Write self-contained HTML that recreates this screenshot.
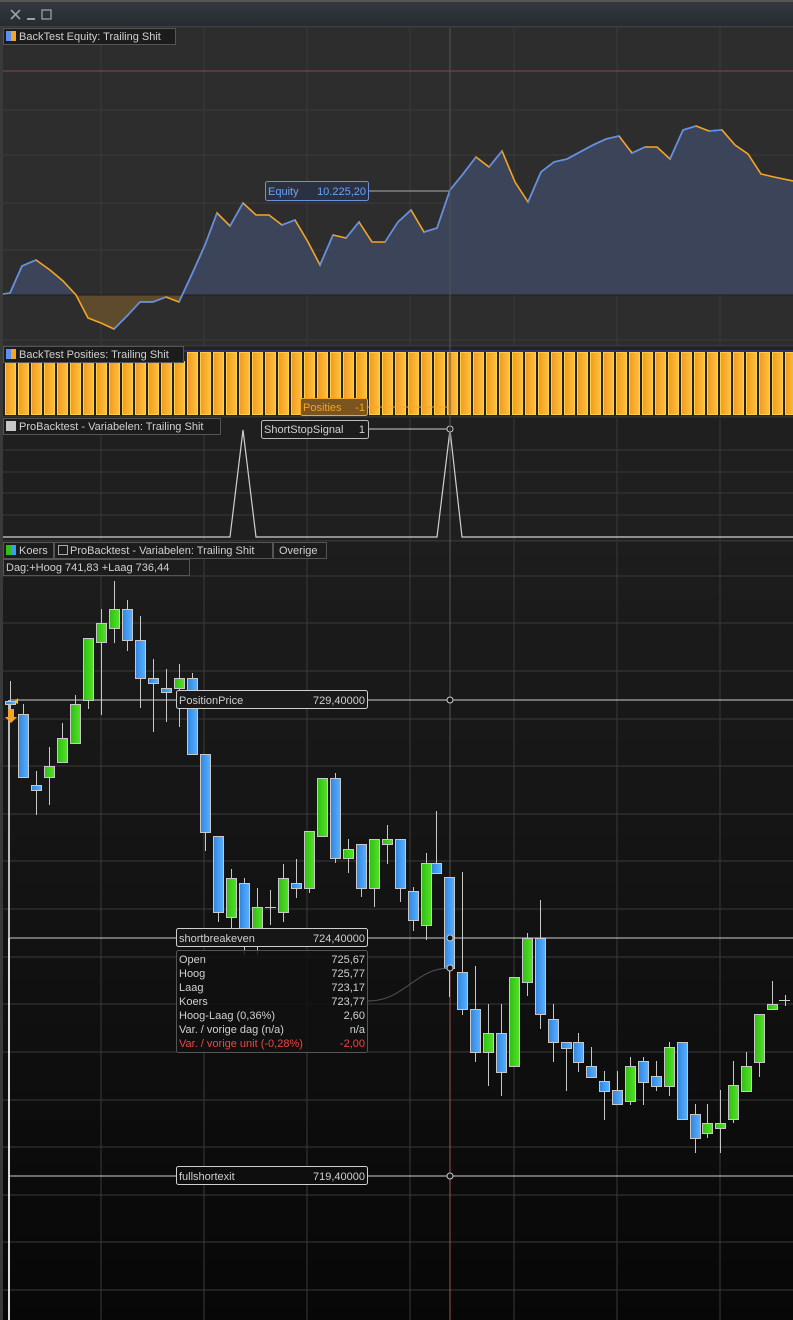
<!DOCTYPE html>
<html><head><meta charset="utf-8"><style>
html,body{margin:0;padding:0;background:#111;}
svg{display:block;font-family:"Liberation Sans",sans-serif;}
.w{stroke:#c8c8c8;stroke-width:1;}
.b{fill:url(#gb);stroke:#c8c8c8;stroke-width:1;}
.g{fill:url(#gg);stroke:#c8c8c8;stroke-width:1;}
.lbl{fill:#1c1c1c;stroke:#555;stroke-width:1;}
.t{fill:#d0d0d0;font-size:11px;}
.grid{stroke:#3a3a3a;stroke-width:1;}
.bar{fill:url(#go);stroke:#ffcf45;stroke-width:1;}
</style></head><body>
<svg width="793" height="1320" viewBox="0 0 793 1320" xmlns="http://www.w3.org/2000/svg">
<defs>
<linearGradient id="gb" x1="0" x2="1"><stop offset="0" stop-color="#2f86e0"/><stop offset="1" stop-color="#5ab0ff"/></linearGradient>
<linearGradient id="gg" x1="0" x2="1"><stop offset="0" stop-color="#2fc012"/><stop offset="1" stop-color="#55e028"/></linearGradient>
<linearGradient id="go" x1="0" x2="1"><stop offset="0" stop-color="#f39a1c"/><stop offset="1" stop-color="#fdc040"/></linearGradient>
<linearGradient id="gc" x1="0" y1="0" x2="0" y2="1"><stop offset="0" stop-color="#1d1d1d"/><stop offset="1" stop-color="#070707"/></linearGradient>
<linearGradient id="gt" x1="0" y1="0" x2="0" y2="1"><stop offset="0" stop-color="#343a40"/><stop offset="1" stop-color="#262b30"/></linearGradient>
<clipPath id="up"><rect x="0" y="28" width="793" height="267"/></clipPath>
<clipPath id="dn"><rect x="0" y="295" width="793" height="50"/></clipPath>
</defs>
<!-- title bar -->
<rect x="0" y="0" width="793" height="27" fill="url(#gt)"/>
<rect x="0" y="0" width="793" height="2" fill="#555"/>
<line x1="0" y1="27" x2="793" y2="27" stroke="#555"/>
<path d="M11 10 L20 19 M20 10 L11 19" stroke="#9aa0a6" stroke-width="1.6"/>
<rect x="27" y="18" width="8" height="2" fill="#9aa0a6"/>
<rect x="42" y="10" width="9" height="9" fill="none" stroke="#9aa0a6" stroke-width="1.3"/>
<rect x="0" y="27" width="3" height="1293" fill="#3a3a3a"/>
<!-- equity panel -->
<rect x="3" y="28" width="790" height="318" fill="#2d2d2d"/>
<g class="grid"><line x1="101" y1="28" x2="101" y2="346"/><line x1="204" y1="28" x2="204" y2="346"/><line x1="307" y1="28" x2="307" y2="346"/><line x1="410" y1="28" x2="410" y2="346"/><line x1="514" y1="28" x2="514" y2="346"/><line x1="617" y1="28" x2="617" y2="346"/><line x1="720" y1="28" x2="720" y2="346"/>
<line x1="3" y1="110" x2="793" y2="110"/><line x1="3" y1="155" x2="793" y2="155"/><line x1="3" y1="203" x2="793" y2="203"/><line x1="3" y1="250" x2="793" y2="250"/><line x1="3" y1="340" x2="793" y2="340"/></g>
<line x1="3" y1="71" x2="793" y2="71" stroke="#8a4646"/>
<polygon clip-path="url(#up)" fill="#3b4459" points="3,295 3,294 10,293 22,266 36,260 50,270 63,281 76,295 88,318 101,323 114,329 127,316 140,302 153,302 166,297 179,302 192,274 205,245 217,213 230,226 243,203 256,215 269,215 282,225 295,220 308,242 320,265 333,235 346,238 359,222 372,242 385,242 398,222 411,210 424,232 437,228 450,190 463,174 476,157 489,167 502,151 515,182 528,202 541,172 554,162 567,159 580,152 593,145 606,139 619,136 632,153 645,147 657,147 670,159 683,130 696,126 709,131 722,130 735,145 748,154 761,174 774,177 793,181 793,295"/>
<polygon clip-path="url(#dn)" fill="#5e4a2c" points="3,295 3,294 10,293 22,266 36,260 50,270 63,281 76,295 88,318 101,323 114,329 127,316 140,302 153,302 166,297 179,302 192,274 205,245 205,295"/>
<line x1="3" y1="295" x2="793" y2="295" stroke="#1e1e1e"/>
<polyline fill="none" stroke="#f5a524" stroke-width="1.6" points="3,294 10,293 22,266 36,260 50,270 63,281 76,295 88,318 101,323 114,329 127,316 140,302 153,302 166,297 179,302 192,274 205,245 217,213 230,226 243,203 256,215 269,215 282,225 295,220 308,242 320,265 333,235 346,238 359,222 372,242 385,242 398,222 411,210 424,232 437,228 450,190 463,174 476,157 489,167 502,151 515,182 528,202 541,172 554,162 567,159 580,152 593,145 606,139 619,136 632,153 645,147 657,147 670,159 683,130 696,126 709,131 722,130 735,145 748,154 761,174 774,177 793,181"/>
<g fill="none" stroke="#5b8ff2" stroke-width="1.6">
<polyline points="3,294 10,293 22,266 36,260"/><polyline points="114,329 127,316 140,302 153,302 166,297"/><polyline points="179,302 192,274 205,245 217,213"/><polyline points="230,226 243,203"/><polyline points="282,225 295,220"/><polyline points="320,265 333,235"/><polyline points="346,238 359,222"/><polyline points="385,242 398,222 411,210"/><polyline points="424,232 437,228 450,190 463,174 476,157"/><polyline points="489,167 502,151"/><polyline points="528,202 541,172 554,162 567,159 580,152 593,145 606,139 619,136"/><polyline points="632,153 645,147"/><polyline points="670,159 683,130 696,126"/><polyline points="709,131 722,130"/></g>
<line x1="369" y1="191" x2="450" y2="191" stroke="#aaa"/>
<rect x="265.5" y="181.5" width="103" height="19" rx="2" fill="#2a3140" stroke="#6f8fd8"/>
<text x="268" y="195" fill="#6fa0ff" font-size="11">Equity</text><text x="366" y="195" fill="#6fa0ff" font-size="11" text-anchor="end">10.225,20</text>
<rect x="3.5" y="28.5" width="172" height="16" class="lbl"/>
<rect x="6" y="31" width="5" height="10" fill="#5b8ff2"/><rect x="11" y="31" width="5" height="10" fill="#f5a524"/>
<text x="19" y="40" class="t">BackTest Equity: Trailing Shit</text>
<line x1="3" y1="346" x2="793" y2="346" stroke="#444"/>
<!-- positions panel -->
<rect x="3" y="347" width="790" height="70" fill="#232323"/>
<line x1="183" y1="351" x2="793" y2="351" stroke="#3040c0"/>
<g class="bar">
<rect x="5.5" y="361.5" width="10" height="53"/><rect x="18.5" y="361.5" width="10" height="53"/><rect x="31.5" y="361.5" width="10" height="53"/><rect x="44.5" y="361.5" width="10" height="53"/><rect x="57.5" y="361.5" width="10" height="53"/><rect x="70.5" y="361.5" width="10" height="53"/><rect x="83.5" y="361.5" width="10" height="53"/><rect x="96.5" y="361.5" width="10" height="53"/><rect x="109.5" y="361.5" width="10" height="53"/><rect x="122.5" y="361.5" width="10" height="53"/><rect x="135.5" y="361.5" width="10" height="53"/><rect x="148.5" y="361.5" width="10" height="53"/><rect x="161.5" y="361.5" width="10" height="53"/><rect x="174.5" y="361.5" width="10" height="53"/>
<rect x="187.5" y="352.5" width="10" height="62"/><rect x="200.5" y="352.5" width="10" height="62"/><rect x="213.5" y="352.5" width="10" height="62"/><rect x="226.5" y="352.5" width="10" height="62"/><rect x="239.5" y="352.5" width="10" height="62"/><rect x="252.5" y="352.5" width="10" height="62"/><rect x="265.5" y="352.5" width="10" height="62"/><rect x="278.5" y="352.5" width="10" height="62"/><rect x="291.5" y="352.5" width="10" height="62"/><rect x="304.5" y="352.5" width="10" height="62"/><rect x="317.5" y="352.5" width="10" height="62"/><rect x="330.5" y="352.5" width="10" height="62"/><rect x="343.5" y="352.5" width="10" height="62"/><rect x="356.5" y="352.5" width="10" height="62"/><rect x="369.5" y="352.5" width="10" height="62"/><rect x="382.5" y="352.5" width="10" height="62"/><rect x="395.5" y="352.5" width="10" height="62"/><rect x="408.5" y="352.5" width="10" height="62"/><rect x="421.5" y="352.5" width="10" height="62"/><rect x="434.5" y="352.5" width="10" height="62"/><rect x="447.5" y="352.5" width="10" height="62"/><rect x="460.5" y="352.5" width="10" height="62"/><rect x="473.5" y="352.5" width="10" height="62"/><rect x="486.5" y="352.5" width="10" height="62"/><rect x="499.5" y="352.5" width="10" height="62"/><rect x="512.5" y="352.5" width="10" height="62"/><rect x="525.5" y="352.5" width="10" height="62"/><rect x="538.5" y="352.5" width="10" height="62"/><rect x="551.5" y="352.5" width="10" height="62"/><rect x="564.5" y="352.5" width="10" height="62"/><rect x="577.5" y="352.5" width="10" height="62"/><rect x="590.5" y="352.5" width="10" height="62"/><rect x="603.5" y="352.5" width="10" height="62"/><rect x="616.5" y="352.5" width="10" height="62"/><rect x="629.5" y="352.5" width="10" height="62"/><rect x="642.5" y="352.5" width="10" height="62"/><rect x="655.5" y="352.5" width="10" height="62"/><rect x="668.5" y="352.5" width="10" height="62"/><rect x="681.5" y="352.5" width="10" height="62"/><rect x="694.5" y="352.5" width="10" height="62"/><rect x="707.5" y="352.5" width="10" height="62"/><rect x="720.5" y="352.5" width="10" height="62"/><rect x="733.5" y="352.5" width="10" height="62"/><rect x="746.5" y="352.5" width="10" height="62"/><rect x="759.5" y="352.5" width="10" height="62"/><rect x="772.5" y="352.5" width="10" height="62"/><rect x="785.5" y="352.5" width="10" height="62"/>
</g>
<rect x="3.5" y="346.5" width="180" height="16" class="lbl"/>
<rect x="6" y="349" width="5" height="10" fill="#5b8ff2"/><rect x="11" y="349" width="5" height="10" fill="#f5a524"/>
<text x="19" y="358" class="t">BackTest Posities: Trailing Shit</text>
<line x1="368" y1="407" x2="450" y2="407" stroke="#f5a524"/>
<rect x="300.5" y="398.5" width="67" height="17" rx="2" fill="#7a5520" stroke="#f5a524"/>
<text x="303" y="411" fill="#f5a524" font-size="11">Posities</text><text x="365" y="411" fill="#f5a524" font-size="11" text-anchor="end">-1</text>
<line x1="3" y1="417" x2="793" y2="417" stroke="#444"/>
<!-- variables panel -->
<rect x="3" y="418" width="790" height="123" fill="#1f1f1f"/>
<g class="grid"><line x1="101" y1="418" x2="101" y2="540"/><line x1="204" y1="418" x2="204" y2="540"/><line x1="307" y1="418" x2="307" y2="540"/><line x1="410" y1="418" x2="410" y2="540"/><line x1="514" y1="418" x2="514" y2="540"/><line x1="617" y1="418" x2="617" y2="540"/><line x1="720" y1="418" x2="720" y2="540"/>
<line x1="3" y1="450" x2="793" y2="450"/><line x1="3" y1="472" x2="793" y2="472"/><line x1="3" y1="493" x2="793" y2="493"/><line x1="3" y1="515" x2="793" y2="515"/></g>
<polyline fill="none" stroke="#d0d0d0" stroke-width="1.2" points="3,537 230,537 243,430 256,537 437,537 450,430 462,537 793,537"/>
<line x1="368" y1="429" x2="450" y2="429" stroke="#ccc"/>
<circle cx="450" cy="429" r="3" fill="#111" stroke="#ccc"/>
<rect x="3.5" y="418.5" width="217" height="16" class="lbl"/>
<rect x="6" y="421" width="10" height="10" fill="#c8c8c8"/>
<text x="19" y="430" class="t">ProBacktest - Variabelen: Trailing Shit</text>
<rect x="261.5" y="420.5" width="107" height="18" rx="2" fill="#1c1c1c" stroke="#bbb"/>
<text x="264" y="433" class="t">ShortStopSignal</text><text x="365" y="433" class="t" text-anchor="end">1</text>
<line x1="3" y1="541" x2="793" y2="541" stroke="#444"/>
<!-- candle panel -->
<rect x="3" y="542" width="790" height="778" fill="url(#gc)"/>
<g class="grid"><line x1="101" y1="542" x2="101" y2="1320"/><line x1="204" y1="542" x2="204" y2="1320"/><line x1="307" y1="542" x2="307" y2="1320"/><line x1="410" y1="542" x2="410" y2="1320"/><line x1="514" y1="542" x2="514" y2="1320"/><line x1="617" y1="542" x2="617" y2="1320"/><line x1="720" y1="542" x2="720" y2="1320"/>
<line x1="3" y1="576" x2="793" y2="576"/><line x1="3" y1="623" x2="793" y2="623"/><line x1="3" y1="671" x2="793" y2="671"/><line x1="3" y1="719" x2="793" y2="719"/><line x1="3" y1="766" x2="793" y2="766"/><line x1="3" y1="814" x2="793" y2="814"/><line x1="3" y1="861" x2="793" y2="861"/><line x1="3" y1="909" x2="793" y2="909"/><line x1="3" y1="957" x2="793" y2="957"/><line x1="3" y1="1004" x2="793" y2="1004"/><line x1="3" y1="1052" x2="793" y2="1052"/><line x1="3" y1="1100" x2="793" y2="1100"/><line x1="3" y1="1147" x2="793" y2="1147"/><line x1="3" y1="1195" x2="793" y2="1195"/><line x1="3" y1="1242" x2="793" y2="1242"/><line x1="3" y1="1290" x2="793" y2="1290"/></g>
<line x1="450" y1="28" x2="450" y2="968" stroke="#555"/>
<line x1="450" y1="968" x2="450" y2="1320" stroke="#a05050"/>
<!-- level lines -->
<line x1="10" y1="700" x2="793" y2="700" stroke="#cfcfcf"/>
<line x1="10" y1="938" x2="793" y2="938" stroke="#cfcfcf"/>
<line x1="10" y1="1176" x2="793" y2="1176" stroke="#cfcfcf"/>
<rect x="8" y="700" width="2" height="620" fill="#bbb"/>
<rect x="8" y="938" width="2" height="382" fill="#ddd"/>
<!-- candles -->
<g>
<line class="w" x1="10.5" y1="681" x2="10.5" y2="720"/><rect class="b" x="5.5" y="701.5" width="10" height="3"/>
<line class="w" x1="23.5" y1="704" x2="23.5" y2="777"/><rect class="b" x="18.5" y="714.5" width="10" height="63"/>
<line class="w" x1="36.5" y1="771" x2="36.5" y2="815"/><rect class="b" x="31.5" y="785.5" width="10" height="5"/>
<line class="w" x1="49.5" y1="747" x2="49.5" y2="805"/><rect class="g" x="44.5" y="766.5" width="10" height="11"/>
<line class="w" x1="62.5" y1="723" x2="62.5" y2="762"/><rect class="g" x="57.5" y="738.5" width="10" height="24"/>
<line class="w" x1="75.5" y1="695" x2="75.5" y2="743"/><rect class="g" x="70.5" y="704.5" width="10" height="39"/>
<line class="w" x1="88.5" y1="638" x2="88.5" y2="709"/><rect class="g" x="83.5" y="638.5" width="10" height="62"/>
<line class="w" x1="101.5" y1="609" x2="101.5" y2="715"/><rect class="g" x="96.5" y="623.5" width="10" height="19"/>
<line class="w" x1="114.5" y1="581" x2="114.5" y2="643"/><rect class="g" x="109.5" y="609.5" width="10" height="19"/>
<line class="w" x1="127.5" y1="600" x2="127.5" y2="651"/><rect class="b" x="122.5" y="609.5" width="10" height="31"/>
<line class="w" x1="140.5" y1="616" x2="140.5" y2="708"/><rect class="b" x="135.5" y="640.5" width="10" height="38"/>
<line class="w" x1="153.5" y1="659" x2="153.5" y2="732"/><rect class="b" x="148.5" y="678.5" width="10" height="5"/>
<line class="w" x1="166.5" y1="669" x2="166.5" y2="722"/><rect class="b" x="161.5" y="688.5" width="10" height="4"/>
<line class="w" x1="179.5" y1="664" x2="179.5" y2="727"/><rect class="g" x="174.5" y="678.5" width="10" height="10"/>
<line class="w" x1="192.5" y1="673" x2="192.5" y2="754"/><rect class="b" x="187.5" y="678.5" width="10" height="76"/>
<line class="w" x1="205.5" y1="754" x2="205.5" y2="851"/><rect class="b" x="200.5" y="754.5" width="10" height="78"/>
<line class="w" x1="218.5" y1="836" x2="218.5" y2="922"/><rect class="b" x="213.5" y="836.5" width="10" height="76"/>
<line class="w" x1="231.5" y1="869" x2="231.5" y2="932"/><rect class="g" x="226.5" y="878.5" width="10" height="39"/>
<line class="w" x1="244.5" y1="878" x2="244.5" y2="955"/><rect class="b" x="239.5" y="883.5" width="10" height="57"/>
<line class="w" x1="257.5" y1="888" x2="257.5" y2="955"/><rect class="g" x="252.5" y="907.5" width="10" height="38"/>
<line class="w" x1="270.5" y1="890" x2="270.5" y2="925"/><line class="w" x1="265" y1="907.5" x2="276" y2="907.5"/>
<line class="w" x1="283.5" y1="864" x2="283.5" y2="922"/><rect class="g" x="278.5" y="878.5" width="10" height="34"/>
<line class="w" x1="296.5" y1="859" x2="296.5" y2="898"/><rect class="b" x="291.5" y="883.5" width="10" height="5"/>
<line class="w" x1="309.5" y1="831" x2="309.5" y2="893"/><rect class="g" x="304.5" y="831.5" width="10" height="57"/>
<line class="w" x1="322.5" y1="778" x2="322.5" y2="836"/><rect class="g" x="317.5" y="778.5" width="10" height="58"/>
<line class="w" x1="335.5" y1="773" x2="335.5" y2="863"/><rect class="b" x="330.5" y="778.5" width="10" height="80"/>
<line class="w" x1="348.5" y1="839" x2="348.5" y2="873"/><rect class="g" x="343.5" y="849.5" width="10" height="9"/>
<line class="w" x1="361.5" y1="844" x2="361.5" y2="897"/><rect class="b" x="356.5" y="844.5" width="10" height="44"/>
<line class="w" x1="374.5" y1="839" x2="374.5" y2="907"/><rect class="g" x="369.5" y="839.5" width="10" height="49"/>
<line class="w" x1="387.5" y1="825" x2="387.5" y2="864"/><rect class="g" x="382.5" y="839.5" width="10" height="5"/>
<line class="w" x1="400.5" y1="839" x2="400.5" y2="902"/><rect class="b" x="395.5" y="839.5" width="10" height="49"/>
<line class="w" x1="413.5" y1="887" x2="413.5" y2="931"/><rect class="b" x="408.5" y="891.5" width="10" height="29"/>
<line class="w" x1="426.5" y1="853" x2="426.5" y2="940"/><rect class="g" x="421.5" y="863.5" width="10" height="62"/>
<line class="w" x1="436.5" y1="811" x2="436.5" y2="873"/><rect class="b" x="431.5" y="863.5" width="10" height="10"/>
<line class="w" x1="449.5" y1="877" x2="449.5" y2="997"/><rect class="b" x="444.5" y="877.5" width="10" height="91"/>
<line class="w" x1="462.5" y1="872" x2="462.5" y2="1015"/><rect class="b" x="457.5" y="972.5" width="10" height="37"/>
<line class="w" x1="475.5" y1="966" x2="475.5" y2="1062"/><rect class="b" x="470.5" y="1009.5" width="10" height="43"/>
<line class="w" x1="488.5" y1="1004" x2="488.5" y2="1086"/><rect class="g" x="483.5" y="1033.5" width="10" height="19"/>
<line class="w" x1="501.5" y1="1004" x2="501.5" y2="1096"/><rect class="b" x="496.5" y="1033.5" width="10" height="39"/>
<line class="w" x1="514.5" y1="977" x2="514.5" y2="1066"/><rect class="g" x="509.5" y="977.5" width="10" height="89"/>
<line class="w" x1="527.5" y1="933" x2="527.5" y2="996"/><rect class="g" x="522.5" y="938.5" width="10" height="44"/>
<line class="w" x1="540.5" y1="900" x2="540.5" y2="1029"/><rect class="b" x="535.5" y="938.5" width="10" height="76"/>
<line class="w" x1="553.5" y1="1004" x2="553.5" y2="1062"/><rect class="b" x="548.5" y="1019.5" width="10" height="23"/>
<line class="w" x1="566.5" y1="1042" x2="566.5" y2="1091"/><rect class="b" x="561.5" y="1042.5" width="10" height="6"/>
<line class="w" x1="578.5" y1="1033" x2="578.5" y2="1072"/><rect class="b" x="573.5" y="1042.5" width="10" height="20"/>
<line class="w" x1="591.5" y1="1047" x2="591.5" y2="1077"/><rect class="b" x="586.5" y="1066.5" width="10" height="11"/>
<line class="w" x1="604.5" y1="1071" x2="604.5" y2="1120"/><rect class="b" x="599.5" y="1081.5" width="10" height="10"/>
<line class="w" x1="617.5" y1="1071" x2="617.5" y2="1104"/><rect class="b" x="612.5" y="1090.5" width="10" height="14"/>
<line class="w" x1="630.5" y1="1057" x2="630.5" y2="1105"/><rect class="g" x="625.5" y="1066.5" width="10" height="35"/>
<line class="w" x1="643.5" y1="1057" x2="643.5" y2="1105"/><rect class="b" x="638.5" y="1061.5" width="10" height="21"/>
<line class="w" x1="656.5" y1="1061" x2="656.5" y2="1091"/><rect class="b" x="651.5" y="1076.5" width="10" height="10"/>
<line class="w" x1="669.5" y1="1042" x2="669.5" y2="1096"/><rect class="g" x="664.5" y="1047.5" width="10" height="39"/>
<line class="w" x1="682.5" y1="1042" x2="682.5" y2="1119"/><rect class="b" x="677.5" y="1042.5" width="10" height="77"/>
<line class="w" x1="695.5" y1="1104" x2="695.5" y2="1153"/><rect class="b" x="690.5" y="1114.5" width="10" height="24"/>
<line class="w" x1="707.5" y1="1104" x2="707.5" y2="1138"/><rect class="g" x="702.5" y="1123.5" width="10" height="10"/>
<line class="w" x1="720.5" y1="1090" x2="720.5" y2="1153"/><rect class="g" x="715.5" y="1123.5" width="10" height="5"/>
<line class="w" x1="733.5" y1="1061" x2="733.5" y2="1123"/><rect class="g" x="728.5" y="1085.5" width="10" height="34"/>
<line class="w" x1="746.5" y1="1052" x2="746.5" y2="1091"/><rect class="g" x="741.5" y="1066.5" width="10" height="25"/>
<line class="w" x1="759.5" y1="1014" x2="759.5" y2="1077"/><rect class="g" x="754.5" y="1014.5" width="10" height="48"/>
<line class="w" x1="772.5" y1="981" x2="772.5" y2="1009"/><rect class="g" x="767.5" y="1004.5" width="10" height="5"/>
<path d="M779 1000.5 H790 M785.5 995 V1006" stroke="#ccc"/>
</g>
<!-- arrow marker -->
<path d="M8 709 h6 v8 h3 l-6 6 l-6 -6 h3z" fill="#f5a524"/>
<path d="M14 702 l4 -4 v6z" fill="#f5c030"/>
<!-- labels -->
<rect x="176.5" y="690.5" width="191" height="18" rx="2" fill="#1a1a1a" stroke="#cfcfcf"/>
<text x="179" y="704" class="t">PositionPrice</text><text x="365" y="704" class="t" text-anchor="end">729,40000</text>
<circle cx="450" cy="700" r="3" fill="#111" stroke="#ccc"/>
<rect x="176.5" y="928.5" width="191" height="18" rx="2" fill="#161616" stroke="#cfcfcf"/>
<text x="179" y="942" class="t">shortbreakeven</text><text x="365" y="942" class="t" text-anchor="end">724,40000</text>
<circle cx="450" cy="938" r="3" fill="#111" stroke="#ccc"/>
<rect x="176.5" y="950.5" width="191" height="102" rx="2" fill="#111" fill-opacity="0.85" stroke="#555"/>
<g class="t">
<text x="179" y="963">Open</text><text x="365" y="963" text-anchor="end">725,67</text>
<text x="179" y="977">Hoog</text><text x="365" y="977" text-anchor="end">725,77</text>
<text x="179" y="991">Laag</text><text x="365" y="991" text-anchor="end">723,17</text>
<text x="179" y="1005">Koers</text><text x="365" y="1005" text-anchor="end">723,77</text>
<text x="179" y="1019">Hoog-Laag (0,36%)</text><text x="365" y="1019" text-anchor="end">2,60</text>
<text x="179" y="1033">Var. / vorige dag (n/a)</text><text x="365" y="1033" text-anchor="end">n/a</text>
</g>
<text x="179" y="1047" fill="#ee4444" font-size="11">Var. / vorige unit (-0,28%)</text><text x="365" y="1047" fill="#ee4444" font-size="11" text-anchor="end">-2,00</text>
<path d="M368 1001 C 405 1001, 415 968, 450 968" fill="none" stroke="#555"/>
<circle cx="450" cy="968" r="3" fill="#111" stroke="#ccc"/>
<rect x="176.5" y="1166.5" width="191" height="18" rx="2" fill="#0e0e0e" stroke="#cfcfcf"/>
<text x="179" y="1180" class="t">fullshortexit</text><text x="365" y="1180" class="t" text-anchor="end">719,40000</text>
<circle cx="450" cy="1176" r="3" fill="#111" stroke="#ccc"/>
<!-- candle legend -->
<rect x="3.5" y="542.5" width="50" height="16" class="lbl"/>
<rect x="6" y="545" width="5" height="10" fill="#2fc012"/><rect x="11" y="545" width="5" height="10" fill="#3d9cf0"/>
<text x="19" y="554" class="t">Koers</text>
<rect x="54.5" y="542.5" width="218" height="16" class="lbl"/>
<rect x="58.5" y="545.5" width="9" height="9" fill="none" stroke="#aaa"/>
<text x="70" y="554" class="t">ProBacktest - Variabelen: Trailing Shit</text>
<rect x="273.5" y="542.5" width="53" height="16" class="lbl"/>
<text x="279" y="554" class="t">Overige</text>
<rect x="3.5" y="559.5" width="186" height="16" class="lbl"/>
<text x="6" y="571" class="t">Dag:+Hoog 741,83 +Laag 736,44</text>
</svg>
</body></html>
